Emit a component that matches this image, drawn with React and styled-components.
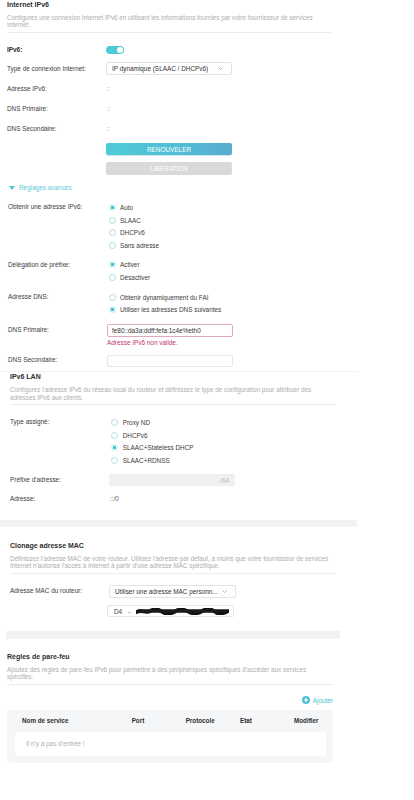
import React from "react";
import styled, { createGlobalStyle } from "styled-components";

const Global = createGlobalStyle`
  html, body { margin: 0; padding: 0; background: #fff; }
  body { font-family: "Liberation Sans", Arial, sans-serif; color: #444; }
  * { box-sizing: border-box; }
`;

const Page = styled.div`
  width: 414px;
  min-height: 800px;
  background: #fff;
  display: flex;
  flex-direction: column;
`;

const Section = styled.section`
  padding-left: ${(p) => p.$pl}px;
  width: ${(p) => p.$w}px;
  margin-top: ${(p) => p.$mt || 0}px;
  border-top: ${(p) => (p.$line ? "1px solid #f2f2f2" : "none")};
  display: flex;
  flex-direction: column;
`;

const Title = styled.h2`
  margin: 0;
  font-size: 7px;
  line-height: 10px;
  font-weight: 700;
  color: #2e2e2e;
`;

const Desc = styled.p`
  margin: 3.75px 0 0;
  font-size: 6.3px;
  line-height: 7.6px;
  color: #adadad;
  white-space: nowrap;
`;

const Divider = styled.div`
  margin-top: 3px;
  height: 1px;
  width: ${(p) => p.$w}px;
  background: #ececec;
`;

const Field = styled.div`
  display: grid;
  grid-template-columns: 99px 1fr;
  align-items: start;
  margin-top: ${(p) => p.$mt}px;
`;

const Label = styled.div`
  font-size: 6.4px;
  line-height: ${(p) => p.$lh || 12}px;
  font-weight: ${(p) => (p.$bold ? 700 : 400)};
  color: ${(p) => (p.$bold ? "#2e2e2e" : "#3c3c3c")};
  white-space: nowrap;
`;

const Value = styled.div`
  font-size: 6.4px;
  line-height: 12px;
  color: ${(p) => p.$c || "#999"};
  padding-left: ${(p) => p.$pl || 1}px;
`;

const ToggleCell = styled.div`
  height: 12px;
  display: flex;
  align-items: center;
`;

const Toggle = styled.div`
  width: 18px;
  height: 8px;
  border-radius: 4px;
  background: #4ccad6;
  display: flex;
  justify-content: flex-end;
  align-items: center;
  padding: 1px;
  &::after {
    content: "";
    width: 6px;
    height: 6px;
    border-radius: 50%;
    background: #fff;
  }
`;

const Select = styled.div`
  width: ${(p) => p.$w || 126}px;
  height: ${(p) => p.$h || 13}px;
  border: 1px solid #e3e3e3;
  border-radius: 2px;
  background: #fff;
  display: flex;
  align-items: center;
  justify-content: space-between;
  padding: 0 8px 0 5px;
  font-size: 6.4px;
  color: #333;
  white-space: nowrap;
`;

const Input = styled.div`
  width: ${(p) => p.$w || 126}px;
  height: ${(p) => p.$h || 12.5}px;
  border: 1px solid ${(p) => (p.$error ? "#dfa9c4" : p.$disabled ? "#efefef" : "#e6e6e6")};
  border-radius: 2px;
  background: ${(p) => (p.$disabled ? "#f0f0f0" : "#fff")};
  display: flex;
  align-items: center;
  justify-content: ${(p) => (p.$disabled ? "flex-end" : "flex-start")};
  padding: 0 ${(p) => (p.$disabled ? 5 : 4)}px;
  font-size: 6.4px;
  color: ${(p) => (p.$disabled ? "#bbb" : "#333")};
  white-space: nowrap;
`;

const MacInput = styled(Input)`
  margin-left: -2px;
  width: 127px;
  padding-left: 6px;
  gap: 6px;
  color: #444;
`;

const ErrorText = styled.div`
  margin-top: 2.5px;
  font-size: 6.4px;
  line-height: 8px;
  color: #c0346e;
`;

const Button = styled.button`
  width: 126px;
  height: 12.5px;
  border: none;
  border-radius: 2px;
  padding: 0;
  font-family: inherit;
  font-size: 6.4px;
  color: #fff;
  text-align: center;
  background: ${(p) =>
    p.$primary ? "linear-gradient(90deg, #4ecbd7 0%, #52bcd5 60%, #58abcd 100%)" : "#d9d9d9"};
  box-shadow: ${(p) => (p.$primary ? "0 1px 1px rgba(60,150,180,0.25)" : "none")};
`;

const Advanced = styled.div`
  margin-top: 7px;
  height: 12px;
  display: flex;
  align-items: center;
  gap: 4px;
  padding-left: 1px;
  font-size: 6.4px;
  color: #5ccad8;
`;

const RadioGroup = styled.div`
  display: flex;
  flex-direction: column;
`;

const RadioItem = styled.div`
  height: 12.5px;
  display: flex;
  align-items: center;
  gap: 4.5px;
  padding-left: ${(p) => p.$pl ?? 1.5}px;
  font-size: 6.4px;
  color: #3c3c3c;
  white-space: nowrap;
`;

const RadioDot = styled.span`
  flex: none;
  width: 7px;
  height: 7px;
  border-radius: 50%;
  border: 1px solid ${(p) => (p.$on ? "#c7ecf0" : "#acdfe6")};
  background: ${(p) =>
    p.$on ? "radial-gradient(circle, #40c3d3 0 1.5px, #e2f6f8 1.9px)" : "#fff"};
`;

const Band = styled.div`
  margin-top: ${(p) => p.$mt}px;
  margin-left: ${(p) => p.$ml}px;
  width: ${(p) => p.$w}px;
  height: 7.5px;
  background: #f2f2f2;
`;

const AddRow = styled.div`
  margin-top: 10.7px;
  width: 326px;
  height: 10px;
  display: flex;
  justify-content: flex-end;
  align-items: center;
  gap: 3px;
  font-size: 6.4px;
  color: #4cc3d5;
`;

const Table = styled.div`
  margin-top: 4.6px;
  width: 326px;
  background: #f5f6f8;
  border-radius: 4px;
  padding: 0 7px 7.7px 7.7px;
`;

const HeadRow = styled.div`
  display: grid;
  grid-template-columns: 109.7px 54px 54.3px 54px auto;
  height: 21.7px;
  align-items: center;
  padding-left: 7.3px;
  font-size: 6.3px;
  font-weight: 700;
  color: #2e2e2e;
`;

const Empty = styled.div`
  height: 24px;
  background: #fff;
  border-radius: 3px;
  padding-left: 11.3px;
  display: flex;
  align-items: center;
  font-size: 6.4px;
  color: #b0b0b0;
`;

const Chevron = () => (
  <svg width="5" height="3" viewBox="0 0 5 3">
    <polyline points="0.5,0.5 2.5,2.5 4.5,0.5" fill="none" stroke="#9a9a9a" strokeWidth="0.7" />
  </svg>
);

const Triangle = () => (
  <svg width="6" height="4" viewBox="0 0 6 4">
    <polygon points="0,0 6,0 3,4" fill="#4cc5d5" />
  </svg>
);

const PlusCircle = () => (
  <svg width="8" height="8" viewBox="0 0 8 8">
    <circle cx="4" cy="4" r="4" fill="#4cc3d5" />
    <path d="M4 2v4M2 4h4" stroke="#fff" strokeWidth="1.2" />
  </svg>
);

const Scribble = () => (
  <svg width="98" height="7" viewBox="0 0 98 7">
    <path
      d="M1 4 C6 1 10 6 15 3 S24 1 28 4 S37 6 42 3 S51 1 56 4 S65 6 70 3 S80 1 84 4 S92 6 97 3"
      fill="none"
      stroke="#111"
      strokeWidth="4"
      strokeLinecap="round"
    />
    <path d="M3 3 L95 3" stroke="#1a1a1a" strokeWidth="3.5" strokeLinecap="round" />
  </svg>
);

const Radios = ({ items, on, pl }) => (
  <RadioGroup>
    {items.map((t, i) => (
      <RadioItem key={t} $pl={pl}>
        <RadioDot $on={i === on} />
        {t}
      </RadioItem>
    ))}
  </RadioGroup>
);

export default function App() {
  return (
    <Page>
      <Global />

      <Section $pl={7} $w={331}>
        <Title>Internet IPv6</Title>
        <Desc>
          Configurez une connexion Internet IPv6 en utilisant les informations fournies par votre fournisseur de services
          <br />
          Internet.
        </Desc>
        <Divider $w={324} />
        <Field $mt={11}>
          <Label $bold>IPv6:</Label>
          <ToggleCell>
            <Toggle />
          </ToggleCell>
        </Field>
        <Field $mt={6}>
          <Label $lh={13}>Type de connexion Internet:</Label>
          <Select>
            IP dynamique (SLAAC / DHCPv6)
            <Chevron />
          </Select>
        </Field>
        <Field $mt={8}>
          <Label>Adresse IPv6:</Label>
          <Value>::</Value>
        </Field>
        <Field $mt={8}>
          <Label>DNS Primaire:</Label>
          <Value>::</Value>
        </Field>
        <Field $mt={8}>
          <Label>DNS Secondaire:</Label>
          <Value>::</Value>
        </Field>
        <Field $mt={8}>
          <span />
          <Button $primary>RENOUVELER</Button>
        </Field>
        <Field $mt={7}>
          <span />
          <Button>LIBÉRATION</Button>
        </Field>
      </Section>

      <Section $pl={8} $w={340}>
        <Advanced>
          <Triangle />
          Réglages avancés
        </Advanced>
        <Field $mt={7.5}>
          <Label $lh={12.5}>Obtenir une adresse IPv6:</Label>
          <Radios items={["Auto", "SLAAC", "DHCPv6", "Sans adresse"]} on={0} />
        </Field>
        <Field $mt={7.25}>
          <Label $lh={12.5}>Délégation de préfixe:</Label>
          <Radios items={["Activer", "Désactiver"]} on={0} />
        </Field>
        <Field $mt={7.5}>
          <Label $lh={12.5}>Adresse DNS:</Label>
          <Radios items={["Obtenir dynamiquement du FAI", "Utiliser les adresses DNS suivantes"]} on={1} />
        </Field>
        <Field $mt={8}>
          <Label $lh={12.5}>DNS Primaire:</Label>
          <div>
            <Input $error>fe80::da3a:ddff:fefa:1c4e%eth0</Input>
            <ErrorText>Adresse IPv6 non valide.</ErrorText>
          </div>
        </Field>
        <Field $mt={7.75}>
          <Label $lh={10}>DNS Secondaire:</Label>
          <Input />
        </Field>
      </Section>

      <Section $pl={10} $w={358} $mt={4} $line>
        <Title>IPv6 LAN</Title>
        <Desc>
          Configurez l'adresse IPv6 du réseau local du routeur et définissez le type de configuration pour attribuer des
          <br />
          adresses IPv6 aux clients.
        </Desc>
        <Divider $w={325} />
        <Field $mt={11}>
          <Label $lh={12.5}>Type assigné:</Label>
          <Radios
            items={["Proxy ND", "DHCPv6", "SLAAC+Stateless DHCP", "SLAAC+RDNSS"]}
            on={2}
            pl={2.2}
          />
        </Field>
        <Field $mt={8}>
          <Label>Préfixe d'adresse:</Label>
          <Input $disabled $h={12}>
            /64
          </Input>
        </Field>
        <Field $mt={7}>
          <Label>Adresse:</Label>
          <Value $c="#666" $pl={1}>
            ::/0
          </Value>
        </Field>
      </Section>
      <Band $mt={14.5} $ml={0} $w={357} />

      <Section $pl={10} $w={358} $mt={13.7}>
        <Title>Clonage adresse MAC</Title>
        <Desc>
          Définissez l'adresse MAC de votre routeur. Utilisez l'adresse par défaut, à moins que votre fournisseur de services
          <br />
          Internet n'autorise l'accès à Internet à partir d'une adresse MAC spécifique.
        </Desc>
        <Divider $w={325} />
        <Field $mt={11}>
          <Label $lh={12.5}>Adresse MAC du routeur:</Label>
          <Select $w={127} $h={12.5}>
            Utiliser une adresse MAC personn...
            <Chevron />
          </Select>
        </Field>
        <Field $mt={7.5}>
          <span />
          <MacInput $h={12}>
            <span>D4</span>
            <span>-</span>
            <Scribble />
          </MacInput>
        </Field>
      </Section>
      <Band $mt={14} $ml={6} $w={334} />

      <Section $pl={7} $w={340} $mt={13.3}>
        <Title>Règles de pare-feu</Title>
        <Desc>
          Ajoutez des règles de pare-feu IPv6 pour permettre à des périphériques spécifiques d'accéder aux services
          <br />
          spécifiés.
        </Desc>
        <Divider $w={326} />
        <AddRow>
          <PlusCircle />
          Ajouter
        </AddRow>
        <Table>
          <HeadRow>
            <span>Nom de service</span>
            <span>Port</span>
            <span>Protocole</span>
            <span>Etat</span>
            <span>Modifier</span>
          </HeadRow>
          <Empty>Il n'y a pas d'entrée !</Empty>
        </Table>
      </Section>
    </Page>
  );
}
